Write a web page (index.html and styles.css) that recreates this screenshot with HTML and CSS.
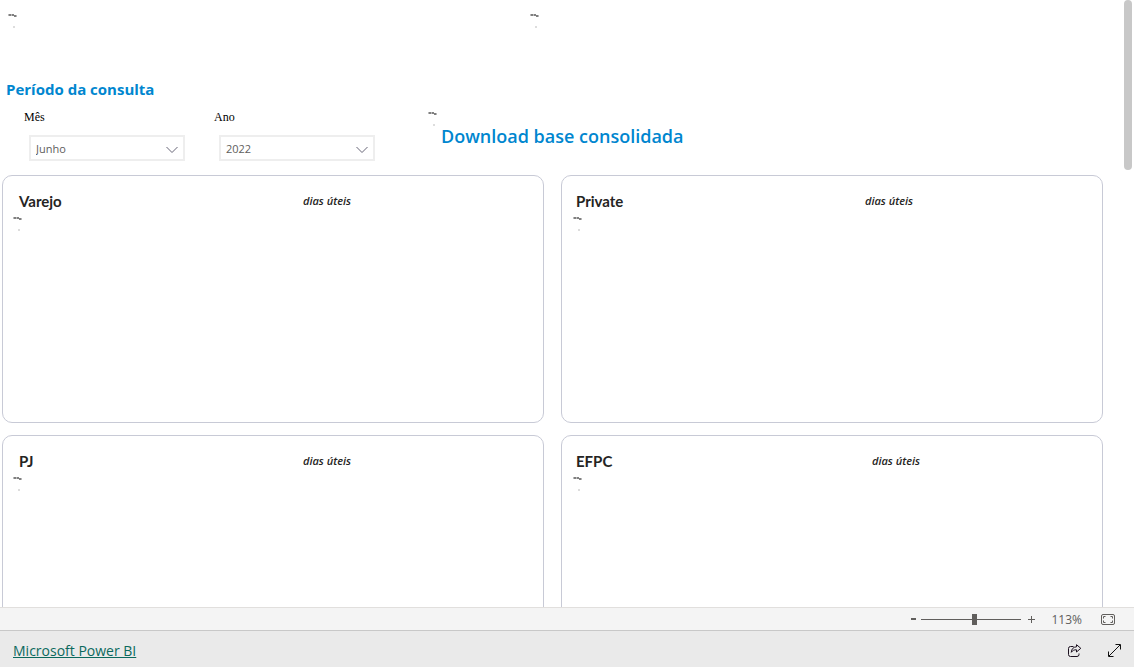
FILE: index.html
```html
<!DOCTYPE html>
<html lang="pt-BR">
<head>
<meta charset="utf-8">
<meta name="viewport" content="width=device-width, initial-scale=1">
<title>Microsoft Power BI</title>
<link rel="stylesheet" href="styles.css">
</head>
<body>
<svg class="symbols" aria-hidden="true">
  <symbol id="mark" viewBox="0 0 10 16">
    <path d="M1 1h2v2H1zM4 1h2v2H4zM6 2h2v2H6z" fill="#808080"/>
    <path d="M0 1h1v2H0zM3 1h1v2H3zM8 2h1v2H8z" fill="#bbb"/>
    <path d="M5 13h2v2H5z" fill="#ddd"/>
  </symbol>
  <symbol id="chevron" viewBox="0 0 12 8">
    <path d="M.5 1 6 6.5 11.5 1" fill="none" stroke="#666577" stroke-width="1"/>
  </symbol>
</svg>
<main class="report">
  <div class="banner">
    <svg class="mark"><use href="#mark"/></svg>
    <svg class="mark"><use href="#mark"/></svg>
  </div>
  <section class="query">
    <form class="filters">
      <h2 class="filters-title">Período da consulta</h2>
      <div class="fields">
        <div class="field">
          <label class="field-label" for="month">Mês</label>
          <div class="dropdown">
            <select class="dropdown-select" id="month"><option>Junho</option></select>
            <svg class="dropdown-arrow"><use href="#chevron"/></svg>
          </div>
        </div>
        <div class="field">
          <label class="field-label" for="year">Ano</label>
          <div class="dropdown">
            <select class="dropdown-select" id="year"><option>2022</option></select>
            <svg class="dropdown-arrow"><use href="#chevron"/></svg>
          </div>
        </div>
      </div>
    </form>
    <div class="download">
      <svg class="mark"><use href="#mark"/></svg>
      <h2 class="download-title">Download base consolidada</h2>
    </div>
  </section>
  <div class="cards">
    <section class="card card-start">
      <header class="card-head"><h3 class="card-title">Varejo</h3><em class="card-unit">dias úteis</em></header>
      <svg class="mark"><use href="#mark"/></svg>
    </section>
    <section class="card">
      <header class="card-head"><h3 class="card-title">Private</h3><em class="card-unit">dias úteis</em></header>
      <svg class="mark"><use href="#mark"/></svg>
    </section>
    <section class="card card-start">
      <header class="card-head"><h3 class="card-title">PJ</h3><em class="card-unit">dias úteis</em></header>
      <svg class="mark"><use href="#mark"/></svg>
    </section>
    <section class="card card-wide">
      <header class="card-head"><h3 class="card-title">EFPC</h3><em class="card-unit">dias úteis</em></header>
      <svg class="mark"><use href="#mark"/></svg>
    </section>
  </div>
  <div class="scroll-thumb"></div>
</main>
<div class="zoombar">
  <button class="zoom-step" type="button" aria-label="Menos zoom"><svg width="5" height="2"><path d="M0 0h5v2H0z" fill="#605e5c"/></svg></button>
  <input class="zoom-range" type="range" min="0" max="100" value="53" aria-label="Zoom">
  <button class="zoom-step" type="button" aria-label="Mais zoom"><svg width="7" height="7"><path d="M3 0h1v3h3v1H4v3H3V4H0V3h3z" fill="#605e5c"/></svg></button>
  <button class="zoom-value" type="button">113%</button>
  <button class="icon-button" type="button" aria-label="Ajustar à página">
    <svg width="14" height="11" viewBox="0 0 14 11" fill="none" stroke="#605e5c"><rect x=".5" y=".5" width="13" height="10" rx="1.5"/><path d="M2.5 4.500V2.500H4.500M9.500 2.500h2v2M11.500 6.500v2h-2M4.500 8.500h-2v-2"/></svg>
  </button>
</div>
<footer class="footer">
  <a class="brand" href="#">Microsoft Power BI</a>
  <button class="icon-button" type="button" aria-label="Compartilhar">
    <svg width="14" height="13" viewBox="0 0 14 13" fill="none" stroke="#1b101f"><path d="M5.500 2.500h-3a2 2 0 0 0-2 2v6a2 2 0 0 0 2 2h6.500a2 2 0 0 0 2-2v-1"/><path d="M8.500.7 12.800 4.300 8.500 8V5.800C6.300 5.600 4.500 6.500 3.300 8.300 3.500 5 5.300 3 8.500 2.800Z" stroke-linejoin="round"/></svg>
  </button>
  <button class="icon-button" type="button" aria-label="Tela inteira">
    <svg width="13" height="13" viewBox="0 0 13 13" fill="none" stroke="#111"><path d="M1 12 12 1M7.500.5h5v5M.5 7.500v5h5"/></svg>
  </button>
</footer>
</body>
</html>
```
FILE: styles.css
```css
* {
  box-sizing: border-box;
}

body {
  margin: 0;
  height: 100vh;
  display: flex;
  flex-direction: column;
  background: #fff;
  font-family: "Open Sans", "Noto Sans", sans-serif;
  color: #252423;
}

h2,
h3 {
  margin: 0;
}

button {
  padding: 0;
  border: 0;
  background: none;
  font: inherit;
  color: inherit;
}

svg {
  display: block;
}

.symbols {
  position: absolute;
  width: 0;
  height: 0;
}

.mark {
  width: 10px;
  height: 16px;
}

.report {
  position: relative;
  flex: 1;
  min-height: 0;
  overflow: hidden;
  padding-right: 31px;
}

.banner {
  display: grid;
  grid-template-columns: 522px 1fr;
  height: 78px;
  padding: 13px 8px 0;
}

.query {
  display: flex;
  height: 97px;
}

.filters {
  width: 428px;
}

.filters-title {
  padding-left: 6px;
  font: bold 15px/22px "Open Sans", sans-serif;
  color: #0086cf;
}

.fields {
  display: flex;
  gap: 34px;
  padding: 8px 0 0 24px;
}

.field {
  width: 156px;
}

.field-label {
  display: block;
  font: 12px/18px "Liberation Serif", serif;
  color: #000;
}

.dropdown {
  position: relative;
  width: 156px;
  height: 26px;
  margin: 9px 0 0 5px;
}

.dropdown-select {
  width: 100%;
  height: 100%;
  padding: 0 5px;
  appearance: none;
  border: 2px solid #eee;
  border-radius: 0;
  background: #fff;
  font: 11px "Open Sans", sans-serif;
  color: #605e5c;
}

.dropdown-arrow {
  position: absolute;
  top: 11px;
  right: 7px;
  width: 12px;
  height: 8px;
  pointer-events: none;
}

.download {
  display: flex;
  gap: 3px;
  padding-top: 33px;
}

.download-title {
  padding-top: 12px;
  font: 600 18px/26px "Open Sans", sans-serif;
  color: #0086cf;
}

.cards {
  display: grid;
  grid-template-columns: 1fr 1fr;
  grid-auto-rows: 248px;
  gap: 12px 17px;
  padding-left: 2px;
}

.card {
  padding: 13px 11px;
  border: 1px solid #c8cad6;
  border-radius: 10px;
}

.card-start {
  padding-left: 10px;
}

.card-head {
  display: grid;
  grid-template-columns: 289px 1fr;
  align-items: center;
  height: 24px;
  margin-bottom: 3px;
  padding-left: 3px;
}

.card-start .card-head {
  grid-template-columns: 284px 1fr;
  padding-left: 6px;
}

.card-wide .card-head {
  grid-template-columns: 296px 1fr;
}

.card-title {
  font: bold 15px/22px Lato, sans-serif;
}

.card-unit {
  font: italic 600 11px/16px "Open Sans", sans-serif;
}

.scroll-thumb {
  position: absolute;
  top: 0;
  right: 2px;
  width: 8px;
  height: 170px;
  border-radius: 4px;
  background: #c8c8c8;
}

.zoombar {
  display: flex;
  align-items: center;
  justify-content: flex-end;
  height: 23px;
  padding-right: 19px;
  border-top: 1px solid #e1dfdd;
  background: #f4f4f4;
  color: #605e5c;
}

.zoom-range {
  width: 100px;
  height: 12px;
  margin: 0 7px 0 5px;
  appearance: none;
  background: linear-gradient(#605e5c, #605e5c) center / 100% 1px no-repeat;
}

.zoom-range::-webkit-slider-thumb {
  appearance: none;
  width: 5px;
  height: 11px;
  background: #605e5c;
}

.zoom-value {
  margin: 0 19px 0 16px;
  font-size: 12px;
}

.footer {
  display: flex;
  align-items: center;
  gap: 26px;
  height: 37px;
  padding: 3px 13px 0;
  border-top: 1px solid #c8c8c8;
  background: #eaeaea;
}

.brand {
  margin-right: auto;
  font-size: 14px;
  line-height: 20px;
  color: #0b695d;
}
```
